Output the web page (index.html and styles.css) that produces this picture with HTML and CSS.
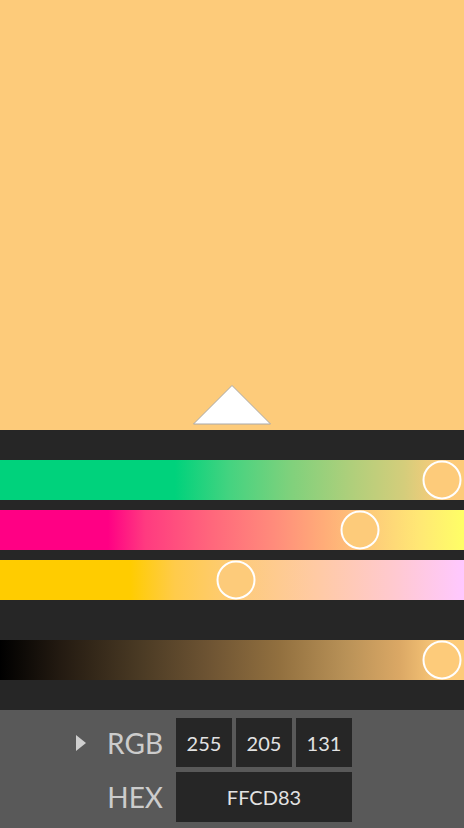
FILE: index.html
```html
<!DOCTYPE html>
<html>
<head>
<meta charset="utf-8">
<link rel="stylesheet" href="styles.css">
</head>
<body>
<div class="app">
  <div class="swatch">
    <svg class="pointer" width="80" height="42" viewBox="0 0 80 42">
      <polygon points="40,1.5 78.5,40 1.5,40" fill="#ffffff" stroke="#a8a8a8" stroke-width="1"/>
    </svg>
  </div>
  <div class="sliders">
    <div class="group">
      <div class="track track-g"><span class="thumb" style="left:442px"></span></div>
      <div class="track track-r"><span class="thumb" style="left:360px"></span></div>
      <div class="track track-b"><span class="thumb" style="left:236px"></span></div>
    </div>
    <div class="group">
      <div class="track track-l"><span class="thumb" style="left:442px"></span></div>
    </div>
  </div>
  <div class="panel">
    <div class="label">
      <svg class="caret" width="10" height="16" viewBox="0 0 10 16"><polygon points="0,0 10,8 0,16" fill="#cfcfcf"/></svg>
      <span>RGB</span>
    </div>
    <div class="box">255</div>
    <div class="box">205</div>
    <div class="box">131</div>
    <div class="label"><span>HEX</span></div>
    <div class="box wide">FFCD83</div>
  </div>
</div>
</body>
</html>
```
FILE: styles.css
```css
html, body {
  margin: 0;
  padding: 0;
  background: #262626;
}
.app {
  width: 464px;
  height: 828px;
  display: flex;
  flex-direction: column;
  overflow: hidden;
}
.swatch {
  height: 430px;
  background: #fdcb7a;
  display: flex;
  justify-content: center;
  align-items: flex-end;
}
.pointer {
  display: block;
  margin-bottom: 4px;
  margin-left: 0;
}
.sliders {
  background: #262626;
  padding: 30px 0;
  display: flex;
  flex-direction: column;
  gap: 40px;
}
.group {
  display: flex;
  flex-direction: column;
  gap: 10px;
}
.track {
  position: relative;
  height: 40px;
}
.thumb {
  position: absolute;
  top: 50%;
  width: 35px;
  height: 35px;
  border: 2px solid #ffffff;
  border-radius: 50%;
  background: #fdcb7a;
  transform: translate(-50%, -50%);
}
.track-g {
  background: linear-gradient(to right, #00d27c 0, #00d27c 175px, #45d380 230px, #7fd17c 290px, #aecf7b 350px, #d5cd7b 405px, #fdcb7a 442px, #fdcb7a 100%);
}
.track-r {
  background: linear-gradient(to right, #ff0084 0, #ff0084 108px, #ff3a80 145px, #ff667c 210px, #ff8c7b 275px, #ffad78 325px, #fdcb7a 370px, #ffe874 420px, #ffff66 100%);
}
.track-b {
  background: linear-gradient(to right, #ffcc00 0, #ffcc00 130px, #ffcb4a 175px, #fdcb7a 236px, #ffcaa6 320px, #ffc9d0 395px, #ffc8ff 100%);
}
.track-l {
  background: linear-gradient(to right, #000000 0, #231a11 60px, #4a3a24 140px, #6e5433 210px, #92703f 280px, #b89157 345px, #dba865 400px, #fdcb7a 442px, #fdcb7a 100%);
}
.panel {
  flex: 1;
  background: #595959;
  padding: 8px 0 6px;
  display: grid;
  grid-template-columns: 172px 56px 56px 56px;
  grid-auto-rows: 49px;
  column-gap: 4px;
  row-gap: 5px;
  font-family: Lato, "Open Sans", sans-serif;
}
.label {
  display: flex;
  align-items: center;
  justify-content: flex-end;
  padding-right: 9px;
  color: #cccccc;
  font-size: 28px;
}
.caret {
  display: block;
  margin-right: 21px;
}
.box {
  background: #262626;
  color: #e2e2e2;
  font-size: 20px;
  display: flex;
  align-items: center;
  justify-content: center;
}
.wide {
  grid-column: span 3;
  height: 50px;
}
```
